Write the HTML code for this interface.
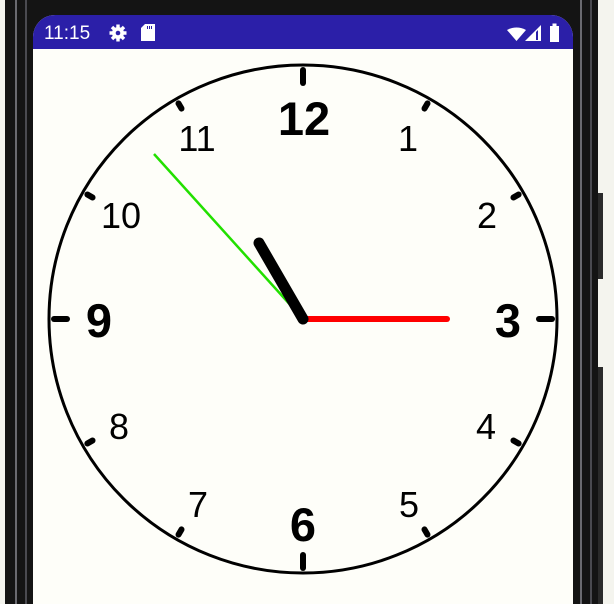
<!DOCTYPE html>
<html><head><style>
html,body{margin:0;padding:0;width:614px;height:604px;overflow:hidden;background:#f4f4ee;}
.bz{position:absolute;left:5px;top:0;width:593px;height:604px;background:#141414;}
.l1{position:absolute;top:0;height:604px;width:2px;background:#6a6a70;}
.btn{position:absolute;left:598px;width:5px;background:#2a2a2a;}
.scr{position:absolute;left:33px;top:15px;width:540px;height:589px;background:#fefef9;border-radius:22px 22px 0 0;overflow:hidden;}
.sb{position:absolute;left:0;top:0;width:540px;height:34px;background:#2b1fa8;}
.t{position:absolute;left:11px;top:8px;color:#fff;font:19px "Liberation Sans",sans-serif;}
</style></head><body>
<div class="bz"></div>
<div class="l1" style="left:15px"></div><div class="l1" style="left:25px;background:#4a4a50"></div>
<div class="l1" style="left:580px"></div><div class="l1" style="left:590px;background:#4a4a50"></div>
<div class="btn" style="top:193px;height:86px"></div>
<div class="btn" style="top:367px;height:237px"></div>
<div class="scr">
<div class="sb">
<div class="t">11:15</div>
<svg width="540" height="34" style="position:absolute;left:0;top:0">
<g fill="#fff">
<circle cx="85" cy="18" r="6"/>
<g stroke="#fff" stroke-width="3.4">
<line x1="85" y1="9.5" x2="85" y2="26.5"/><line x1="76.5" y1="18" x2="93.5" y2="18"/>
<line x1="79" y1="12" x2="91" y2="24"/><line x1="91" y1="12" x2="79" y2="24"/>
</g>
<circle cx="85" cy="18" r="2.3" fill="#2b1fa8"/>
<path d="M112 9h10v17h-14v-13z"/>
<path d="M474 15a19 19 0 0 1 19 0l-9.5 11z"/>
<path d="M492 26l16-16v16z"/>
<rect x="517" y="11" width="9" height="16"/><rect x="519.5" y="8.5" width="4" height="3"/>
</g>
<g fill="#2b1fa8"><rect x="114" y="11" width="1" height="3"/><rect x="116" y="11" width="1" height="3"/><rect x="118" y="11" width="1" height="3"/>
<path d="M505 15v10h-2v-8z"/></g>
</svg>
</div>
</div>
<svg width="614" height="604" style="position:absolute;left:0;top:0" font-family="Liberation Sans,sans-serif">
<circle cx="303" cy="319" r="254" fill="none" stroke="#000" stroke-width="3"/>
<g stroke="#000" stroke-linecap="round" stroke-width="6">
<line x1="303" y1="70" x2="303" y2="83"/><line x1="303" y1="568" x2="303" y2="555"/>
<line x1="54" y1="319" x2="67" y2="319"/><line x1="552" y1="319" x2="539" y2="319"/>
</g>
<g stroke="#000" stroke-linecap="round" stroke-width="6" transform="translate(303 319)">
<line x1="0" y1="-249" x2="0" y2="-243" transform="rotate(30)"/>
<line x1="0" y1="-249" x2="0" y2="-243" transform="rotate(60)"/>
<line x1="0" y1="-249" x2="0" y2="-243" transform="rotate(120)"/>
<line x1="0" y1="-249" x2="0" y2="-243" transform="rotate(150)"/>
<line x1="0" y1="-249" x2="0" y2="-243" transform="rotate(210)"/>
<line x1="0" y1="-249" x2="0" y2="-243" transform="rotate(240)"/>
<line x1="0" y1="-249" x2="0" y2="-243" transform="rotate(300)"/>
<line x1="0" y1="-249" x2="0" y2="-243" transform="rotate(330)"/>
</g>
<g text-anchor="middle" fill="#000" font-size="36">
<text x="408" y="151">1</text><text x="487" y="228">2</text>
<text x="486" y="439">4</text><text x="409" y="517">5</text>
<text x="198" y="517">7</text><text x="119" y="439">8</text>
<text x="121" y="228">10</text><text x="197" y="151">11</text>
</g>
<g text-anchor="middle" fill="#000" font-size="47" font-weight="bold">
<text x="304" y="135">12</text><text x="508" y="337">3</text>
<text x="303" y="541">6</text><text x="99" y="337">9</text>
</g>
<line x1="303" y1="319" x2="154" y2="154" stroke="#22e000" stroke-width="2.5"/>
<line x1="303" y1="319" x2="447" y2="319" stroke="#f00" stroke-width="6" stroke-linecap="round"/>
<line x1="303" y1="319" x2="259" y2="243" stroke="#000" stroke-width="11" stroke-linecap="round"/>
</svg>
</body></html>
